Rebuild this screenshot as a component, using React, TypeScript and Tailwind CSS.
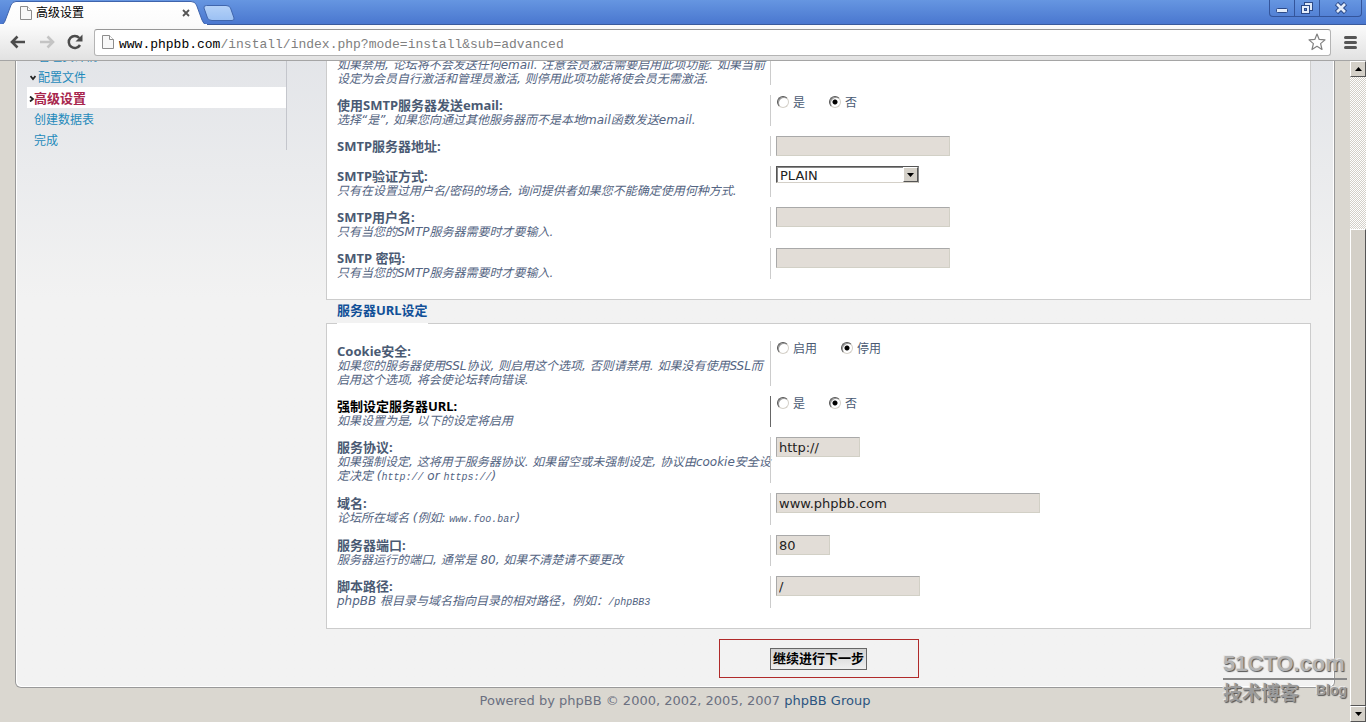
import type { ReactNode } from "react";

const SANS = "font-['DejaVu_Sans','Noto_Sans_CJK_SC',sans-serif]";
const MONO = "font-['Liberation_Mono','Noto_Sans_CJK_SC',monospace]";

function PageIcon({ className }: { className: string }) {
  return (
    <svg viewBox="0 0 12 14" className={className} aria-hidden="true">
      <path d="M0.5 0.5H7.5L11.5 4.5V13.5H0.5Z" fill="#f8f8f8" stroke="#8d8d8d" />
      <path d="M7.5 0.5V4.5H11.5" fill="#fff" stroke="#8d8d8d" />
    </svg>
  );
}

function TabStrip() {
  return (
    <div className="relative flex h-[25px] shrink-0 justify-between border-b border-[#3a5a9c] bg-linear-to-b from-[#6696e1] to-[#4a77cf]">
      <svg className="absolute top-0 left-0 h-[25px] w-60" viewBox="0 0 240 25" aria-hidden="true">
        <defs>
          <linearGradient id="tab" x1="0" y1="0" x2="0" y2="1">
            <stop offset="0" stopColor="#fff" />
            <stop offset="1" stopColor="#fbfbfb" />
          </linearGradient>
          <linearGradient id="newTab" x1="0" y1="0" x2="0" y2="1">
            <stop offset="0" stopColor="#b5d2f8" />
            <stop offset="1" stopColor="#9bc0f3" />
          </linearGradient>
        </defs>
        <path d="M0 25C3 25 4 23 5 21L11 5Q12.500 1.500 16 1.500H191Q195 1.500 196.500 5L202 20Q203.500 24.500 207 25Z" fill="url(#tab)" stroke="#3f64ac" />
        <rect x="0" y="24" width="207" height="1" fill="#fbfbfb" />
        <path d="M206.500 5.500H226Q229.500 5.500 230.500 8L234 18Q234.500 20.500 232 20.500H212Q208.500 20.500 207.500 18L204 8Q203.500 5.500 206.500 5.500Z" fill="url(#newTab)" stroke="#4066ad" />
      </svg>
      <div className="relative flex w-[206px] items-center pt-[2px] pl-5">
        <PageIcon className="h-[14px] w-[12px]" />
        <span className="ml-1 flex-1 text-[12px] leading-4 text-black">高级设置</span>
        <button type="button" aria-label="关闭标签" className="mr-[14px] flex size-3 items-center justify-center">
          <svg viewBox="0 0 8 8" className="size-2" aria-hidden="true">
            <path d="M1 1L7 7M7 1L1 7" stroke="#555" strokeWidth="1.800" />
          </svg>
        </button>
      </div>
      <div className="mr-1 flex h-[17px] rounded-b border border-t-0 border-[#34559b]">
        <button type="button" aria-label="最小化" className="flex w-[25px] items-center justify-center border-r border-[#34559b]">
          <svg viewBox="0 0 14 14" className="size-[14px]" aria-hidden="true">
            <rect x="1.500" y="7.500" width="11" height="4" rx="1" fill="#e4edfa" stroke="#2c4a88" />
          </svg>
        </button>
        <button type="button" aria-label="还原" className="flex w-[25px] items-center justify-center border-r border-[#34559b]">
          <svg viewBox="0 0 14 14" className="size-[14px]" aria-hidden="true">
            <rect x="4.500" y="1.500" width="8" height="8" fill="#dfe9f8" stroke="#2c4a88" />
            <rect x="1.500" y="4.500" width="8" height="8" fill="#e4edfa" stroke="#2c4a88" />
            <rect x="4.500" y="7.500" width="2" height="2" fill="#5d8bd9" stroke="#2c4a88" />
          </svg>
        </button>
        <button type="button" aria-label="关闭" className="flex w-[41px] items-center justify-center">
          <svg viewBox="0 0 14 14" className="size-[14px]" aria-hidden="true">
            <path d="M2.500 2.500L11.500 11.500M11.500 2.500L2.500 11.500" stroke="#2c4a88" strokeWidth="4.600" />
            <path d="M3 3L11 11M11 3L3 11" stroke="#e4edfa" strokeWidth="2.600" />
          </svg>
        </button>
      </div>
    </div>
  );
}

function Toolbar() {
  return (
    <div className="flex h-9 shrink-0 items-center border-b border-[#a5a5a5] bg-linear-to-b from-[#fbfbfb] to-[#e2e2e2] pb-px">
      <button type="button" aria-label="后退" className="ml-[10px]">
        <svg viewBox="0 0 16 14" className="h-[14px] w-4" aria-hidden="true">
          <path d="M15 7H2M7.500 1.500L2 7L7.500 12.500" fill="none" stroke="#4c4c4c" strokeWidth="2.600" />
        </svg>
      </button>
      <button type="button" aria-label="前进" className="ml-[13px]">
        <svg viewBox="0 0 16 14" className="h-[14px] w-4" aria-hidden="true">
          <path d="M1 7H14M8.500 1.500L14 7L8.500 12.500" fill="none" stroke="#c4c4c4" strokeWidth="2.600" />
        </svg>
      </button>
      <button type="button" aria-label="重新加载" className="ml-3">
        <svg viewBox="0 0 16 16" className="size-4" aria-hidden="true">
          <path d="M13 11A6 6 0 1 1 12.300 4" fill="none" stroke="#4c4c4c" strokeWidth="2.500" />
          <path d="M15.500 0.500V7.500H8.500Z" fill="#4c4c4c" />
        </svg>
      </button>
      <div className="ml-[11px] flex h-[27px] flex-1 items-center rounded-[3px] border border-[#b4b4b4] border-t-[#969696] bg-white pl-[7px]">
        <PageIcon className="h-[14px] w-[12px]" />
        <span className={`${MONO} ml-[5px] flex-1 pt-[6px] text-[13px] leading-4 text-[#808080]`}>
          <span className="text-black">www.phpbb.com</span>/install/index.php?mode=install&amp;sub=advanced
        </span>
        <button type="button" aria-label="收藏" className="mr-[3px]">
          <svg viewBox="0 0 20 20" className="size-5" aria-hidden="true">
            <path d="M10 2L12.200 7.400L18 7.900L13.600 11.600L15 17.500L10 14.300L5 17.500L6.400 11.600L2 7.900L7.800 7.400Z" fill="#fff" stroke="#808080" strokeWidth="1.200" strokeLinejoin="round" />
          </svg>
        </button>
      </div>
      <button type="button" aria-label="菜单" className="mr-[9px] ml-[13px] flex w-[13px] flex-col gap-[2px]">
        <span className="h-[3px] rounded-xs bg-[#555]" />
        <span className="h-[3px] rounded-xs bg-[#555]" />
        <span className="h-[3px] rounded-xs bg-[#555]" />
      </button>
    </div>
  );
}

function Sidebar() {
  const row = "flex h-[21px] items-center pt-[2px]";
  const link = "text-[#1f8abb]";
  return (
    <nav className="mt-[5px] h-[105px] w-[260px] shrink-0 border-r border-[#c4c6cc] text-[12px]">
      <ul>
        <li className={`${row} pl-[11px]`}>
          <a href="#admin" className={link}>管理员详情</a>
        </li>
        <li className={`${row} pl-[3px]`}>
          <svg viewBox="0 0 6 6" className="size-[6px]" aria-hidden="true">
            <path d="M0.500 1L3 4L5.500 1" fill="none" stroke="#222" strokeWidth="1.800" />
          </svg>
          <a href="#config" className={`${link} ml-[2px]`}>配置文件</a>
        </li>
        <li className={`${row} bg-white pl-[2px]`}>
          <svg viewBox="0 0 6 6" className="size-[6px]" aria-hidden="true">
            <path d="M1 0.500L4 3L1 5.500" fill="none" stroke="#222" strokeWidth="1.800" />
          </svg>
          <a href="#advanced" aria-current="page" className="-ml-px text-[13px] font-bold text-[#a8264d]">高级设置</a>
        </li>
        <li className={`${row} pl-[7px]`}>
          <a href="#tables" className={link}>创建数据表</a>
        </li>
        <li className={`${row} pl-[7px]`}>
          <a href="#finish" className={link}>完成</a>
        </li>
      </ul>
    </nav>
  );
}

interface RowProps {
  id: string;
  label: string;
  hint?: ReactNode;
  group?: boolean;
  active?: boolean;
  height?: string;
  children?: ReactNode;
}

function Row({ id, label, hint, group, active, height = "h-[31px]", children }: RowProps) {
  const tone = `text-[13px] font-bold ${active ? "text-black" : "text-[#4a5a73]"}`;
  return (
    <div className={`flex ${height}`} {...(group ? { role: "radiogroup", "aria-labelledby": `${id}-label` } : {})}>
      <div className="w-[433px] shrink-0 pt-[3px] whitespace-nowrap">
        <div className={`font-['Noto_Sans','Noto_Sans_CJK_SC',sans-serif] leading-[15px] ${tone}`}>
          {group ? <span id={`${id}-label`}>{label}</span> : <label htmlFor={id}>{label}</label>}
        </div>
        {hint && <p className="text-[12px] leading-[14px] text-[#536482] italic">{hint}</p>}
      </div>
      <div className={`flex flex-1 items-start border-l pl-[5px] ${active ? "border-[#666]" : "border-[#ccc]"}`}>{children}</div>
    </div>
  );
}

function Choices({ name, options }: { name: string; options: [string, string] }) {
  return (
    <div className="flex gap-6 pl-px text-[12px] leading-4 text-[#4a5a73]">
      {options.map((text, i) => (
        <label key={text} className="flex items-start gap-1">
          <input
            type="radio"
            name={name}
            defaultChecked={i === 1}
            className="mt-px size-3 appearance-none rounded-full border border-t-[#555] border-r-[#d4d0c8] border-b-[#d4d0c8] border-l-[#555] bg-white shadow-[inset_1px_1px_0_#999] checked:bg-[radial-gradient(circle,#000_2px,transparent_3px)]"
          />
          {text}
        </label>
      ))}
    </div>
  );
}

function TextBox({ id, width, value = "", type = "text" }: { id: string; width: string; value?: string; type?: string }) {
  return (
    <input
      id={id}
      type={type}
      defaultValue={value}
      className={`${width} h-5 border border-t-[#a9a9a9] border-r-[#d2d0c6] border-b-[#d2d0c6] border-l-[#a9a9a9] bg-[#e2ddd7] px-[2px] text-[13px] leading-[18px] text-[#222] outline-none`}
    />
  );
}

function SmtpPanel() {
  return (
    <section className="flex flex-col gap-[10px] border border-[#ccc] bg-white px-[10px] pt-[14px] pb-5">
      <div className="flex h-[30px]">
        <p className="w-[433px] shrink-0 pt-[3px] text-[12px] leading-[14px] whitespace-nowrap text-[#536482] italic">
          如果禁用, 论坛将不会发送任何email. 注意会员激活需要启用此项功能. 如果当前
          <br />
          设定为会员自行激活和管理员激活, 则停用此项功能将使会员无需激活.
        </p>
        <div className="flex-1 border-l border-[#ccc]" />
      </div>
      <Row id="smtp" group label="使用SMTP服务器发送email:" hint="选择“是”, 如果您向通过其他服务器而不是本地mail函数发送email.">
        <Choices name="smtp" options={["是", "否"]} />
      </Row>
      <Row id="smtp-host" height="h-5" label="SMTP服务器地址:">
        <TextBox id="smtp-host" width="w-[174px]" />
      </Row>
      <Row id="smtp-auth" label="SMTP验证方式:" hint="只有在设置过用户名/密码的场合, 询问提供者如果您不能确定使用何种方式.">
        <span className="relative flex">
          <select
            id="smtp-auth"
            className="h-[17px] w-[143px] appearance-none border border-t-[#555] border-r-[#888] border-b-[#d4d0c8] border-l-[#555] bg-white pt-px pl-[3px] text-[13px] leading-[15px] text-[#222] shadow-[inset_1px_1px_0_#888]"
          >
            <option>PLAIN</option>
            <option>LOGIN</option>
          </select>
          <span className="pointer-events-none absolute top-px right-px flex h-[15px] w-[15px] items-center justify-center border border-t-white border-r-[#555] border-b-[#555] border-l-white bg-[#d4d0c8]">
            <svg viewBox="0 0 7 4" className="h-1 w-[7px]" aria-hidden="true">
              <path d="M0 0H7L3.500 4Z" fill="#000" />
            </svg>
          </span>
        </span>
      </Row>
      <Row id="smtp-user" label="SMTP用户名:" hint="只有当您的SMTP服务器需要时才要输入.">
        <TextBox id="smtp-user" width="w-[174px]" />
      </Row>
      <Row id="smtp-pass" label="SMTP 密码:" hint="只有当您的SMTP服务器需要时才要输入.">
        <TextBox id="smtp-pass" width="w-[174px]" type="password" />
      </Row>
    </section>
  );
}

function Code({ children }: { children: ReactNode }) {
  return <code className={`${MONO} text-[10px]`}>{children}</code>;
}

function UrlPanel() {
  return (
    <section>
      <h2 className="relative z-10 -mb-px ml-[11px] h-6 w-fit border-b border-white font-['Noto_Sans','Noto_Sans_CJK_SC',sans-serif] text-[13px] leading-5 font-bold text-[#115098]">
        服务器URL设定
      </h2>
      <div className="flex flex-col gap-[10px] border border-[#ccc] bg-white px-[10px] pt-[17px] pb-5">
        <Row
          id="cookie"
          group
          height="h-[45px]"
          label="Cookie安全:"
          hint={<>如果您的服务器使用SSL协议, 则启用这个选项, 否则请禁用. 如果没有使用SSL而<br />启用这个选项, 将会使论坛转向错误.</>}
        >
          <Choices name="cookie" options={["启用", "停用"]} />
        </Row>
        <Row id="force" group active label="强制设定服务器URL:" hint="如果设置为是, 以下的设定将启用">
          <Choices name="force" options={["是", "否"]} />
        </Row>
        <Row
          id="protocol"
          height="h-[46px]"
          label="服务协议:"
          hint={<>如果强制设定, 这将用于服务器协议. 如果留空或未强制设定, 协议由cookie安全设<br />定决定 (<Code>http://</Code> or <Code>https://</Code>)</>}
        >
          <TextBox id="protocol" width="w-[84px]" value="http://" />
        </Row>
        <Row id="domain" height="h-8" label="域名:" hint={<>论坛所在域名 (例如: <Code>www.foo.bar</Code>)</>}>
          <TextBox id="domain" width="w-[264px]" value="www.phpbb.com" />
        </Row>
        <Row id="port" label="服务器端口:" hint="服务器运行的端口, 通常是 80, 如果不清楚请不要更改">
          <TextBox id="port" width="w-[54px]" value="80" />
        </Row>
        <Row id="path" height="h-8" label="脚本路径:" hint={<>phpBB 根目录与域名指向目录的相对路径，例如：<Code>/phpBB3</Code></>}>
          <TextBox id="path" width="w-[144px]" value="/" />
        </Row>
      </div>
    </section>
  );
}

function ScrollBar() {
  const button =
    "flex h-4 w-full items-center justify-center border border-t-white border-r-[#555] border-b-[#555] border-l-white bg-[#d4d0c8]";
  return (
    <div className="flex w-4 shrink-0 flex-col">
      <button type="button" aria-label="向上滚动" className={button}>
        <svg viewBox="0 0 7 4" className="h-1 w-[7px]" aria-hidden="true">
          <path d="M0 4H7L3.500 0Z" fill="#000" />
        </svg>
      </button>
      <div className="h-[152px] bg-[repeating-conic-gradient(#fff_0_25%,#d4d0c8_0_50%)] bg-size-[2px_2px]" />
      <div className="flex-1 border border-t-white border-r-[#555] border-b-[#555] border-l-white bg-[#d4d0c8]" />
      <button type="button" aria-label="向下滚动" className={button}>
        <svg viewBox="0 0 7 4" className="h-1 w-[7px]" aria-hidden="true">
          <path d="M0 0H7L3.500 4Z" fill="#000" />
        </svg>
      </button>
    </div>
  );
}

function Watermark() {
  return (
    <div
      className="pointer-events-none absolute right-[3px] bottom-[16px] z-20 w-[124px] font-['Liberation_Sans','Noto_Sans_CJK_SC',sans-serif] font-bold whitespace-nowrap text-[#b4b4b4] [text-shadow:1px_1px_1px_#555,-1px_-1px_0_#e8e8e8]"
    >
      <div className="border-b-2 border-[#888] text-[22px] leading-[28px]">51CTO.com</div>
      <div className="flex justify-between leading-6 text-[#9c9c9c]">
        <span className="pt-[2px] text-[19px]">技术博客</span>
        <span className="text-[14px] leading-5">Blog</span>
      </div>
    </div>
  );
}

export default function App() {
  return (
    <div className={`${SANS} flex h-screen flex-col overflow-hidden`}>
      <TabStrip />
      <Toolbar />
      <div className="flex min-h-0 flex-1">
        <div className="relative flex flex-1 flex-col justify-end overflow-hidden bg-[#dad7d0] px-[15px]">
          <div className="rounded-b-md border border-t-0 border-[#999] bg-white px-px pb-px">
            <main className="flex gap-[39px] rounded-b-[5px] bg-linear-to-b from-[#e2e4e8] to-[#f2f2f2] to-40% pr-[22px] pb-[8px] pl-[10px]">
              <Sidebar />
              <form className="min-w-0 flex-1" onSubmit={(e) => e.preventDefault()}>
                <SmtpPanel />
                <UrlPanel />
                <div className="mx-auto mt-[10px] flex h-[39px] w-[200px] items-center justify-center border border-[#b02a2a]">
                  <button
                    type="submit"
                    className="h-[22px] border border-[#666] bg-linear-to-b from-[#d2d2d2] to-[#efefef] px-[2px] text-[13px] leading-5 font-bold whitespace-nowrap text-black"
                  >
                    继续进行下一步
                  </button>
                </div>
              </form>
            </main>
          </div>
          <footer className="h-[34px] shrink-0 pt-1 text-center text-[13px] leading-[18px] text-[#6b7080]">
            Powered by phpBB © 2000, 2002, 2005, 2007{" "}
            <a href="#group" className="text-[#2c5580]">phpBB Group</a>
          </footer>
          <Watermark />
        </div>
        <ScrollBar />
      </div>
    </div>
  );
}
